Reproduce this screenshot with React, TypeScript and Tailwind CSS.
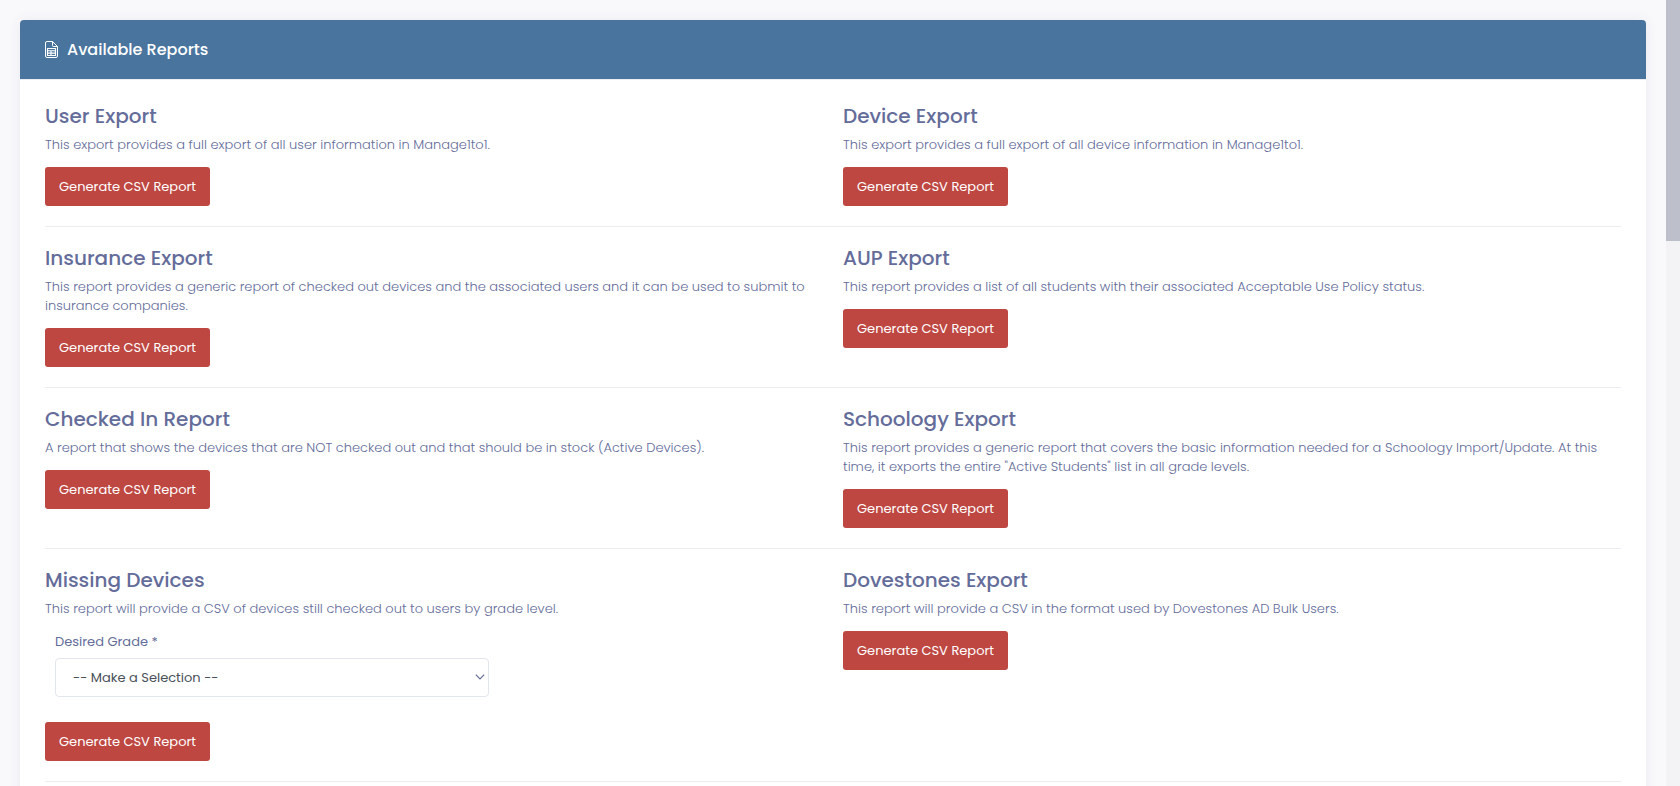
import { ReactNode } from 'react'

type Report = {
  title: string
  description: string
  form?: ReactNode
}

function GradeSelect() {
  return (
    <div className="mb-[25px] w-7/12 px-2.5">
      <label htmlFor="grade" className="block text-[13px] leading-[22px] text-[#646c9a]">Desired Grade *</label>
      <div className="relative mt-[5px]">
        <select
          id="grade"
          defaultValue=""
          className="block h-[39px] w-full appearance-none rounded border border-[#e2e5ec] bg-white px-[17px] text-[13px] text-[#495057] outline-none"
        >
          <option value="">-- Make a Selection --</option>
          <option value="9">9</option>
          <option value="10">10</option>
          <option value="11">11</option>
          <option value="12">12</option>
        </select>
        <svg className="pointer-events-none absolute top-4 right-1 h-1.5 w-2.5" viewBox="0 0 10 6" fill="none" stroke="#646c9a" strokeWidth="1.2">
          <path d="M.8.7 5 4.9 9.2.7" />
        </svg>
      </div>
    </div>
  )
}

const rows: Report[][] = [
  [
    { title: 'User Export', description: 'This export provides a full export of all user information in Manage1to1.' },
    { title: 'Device Export', description: 'This export provides a full export of all device information in Manage1to1.' },
  ],
  [
    { title: 'Insurance Export', description: 'This report provides a generic report of checked out devices and the associated users and it can be used to submit to insurance companies.' },
    { title: 'AUP Export', description: 'This report provides a list of all students with their associated Acceptable Use Policy status.' },
  ],
  [
    { title: 'Checked In Report', description: 'A report that shows the devices that are NOT checked out and that should be in stock (Active Devices).' },
    { title: 'Schoology Export', description: 'This report provides a generic report that covers the basic information needed for a Schoology Import/Update. At this time, it exports the entire "Active Students" list in all grade levels.' },
  ],
  [
    { title: 'Missing Devices', description: 'This report will provide a CSV of devices still checked out to users by grade level.', form: <GradeSelect /> },
    { title: 'Dovestones Export', description: 'This report will provide a CSV in the format used by Dovestones AD Bulk Users.' },
  ],
]

function ReportIcon() {
  return (
    <svg className="h-[17px] w-[13px]" viewBox="0 0 13 17" fill="none" stroke="white" strokeLinejoin="round">
      <path d="M7.5.5H2A1.5 1.5 0 0 0 .5 2v13A1.5 1.5 0 0 0 2 16.5h9a1.5 1.5 0 0 0 1.5-1.5V5.5z" />
      <path d="M7.5.5v4a1 1 0 0 0 1 1h4" />
      <path d="M2.5 7.5h8v7h-8z" strokeWidth="1.2" />
      <path d="M2.5 9.8h8M2.5 12.1h8M6 9.8v4.7" strokeWidth="1.1" />
    </svg>
  )
}

function ReportBlock({ report }: { report: Report }) {
  return (
    <section>
      <h3 className="mb-2 text-xl leading-[22px] font-medium text-[#646c9a]">{report.title}</h3>
      <p className="mb-[13px] text-[13px] leading-[19px] font-light text-[#646c9a]">{report.description}</p>
      {report.form}
      <button type="button" className="block h-[39px] rounded-[3px] bg-[#be4742] px-3.5 text-[13px] whitespace-nowrap text-white">
        Generate CSV Report
      </button>
    </section>
  )
}

export default function App() {
  return (
    <div className="flex h-screen overflow-hidden bg-[#f9f9fc] font-[Poppins,Inter,sans-serif]">
      <main className="min-w-0 flex-1 p-5">
        <div className="rounded bg-white shadow-[0_0_13px_rgba(82,63,105,0.08)]">
          <div className="flex h-[60px] items-center gap-[9px] rounded-t border-b border-[#ebedf2] bg-[#48749e] bg-clip-padding px-[25px] text-white">
            <ReportIcon />
            <h2 className="text-base font-medium">Available Reports</h2>
          </div>
          <div className="p-[25px]">
            {rows.map(row => (
              <div key={row[0].title} className="mb-5 grid grid-cols-2 gap-x-5 border-b border-[#ebedf2] pb-5">
                {row.map(r => <ReportBlock key={r.title} report={r} />)}
              </div>
            ))}
          </div>
        </div>
      </main>

      {/* Scroll track */}
      <div className="w-3.5 shrink-0 bg-[#f3f3f6]">
        <div className="h-[241px] bg-[#bdbfca]" />
      </div>
    </div>
  )
}
